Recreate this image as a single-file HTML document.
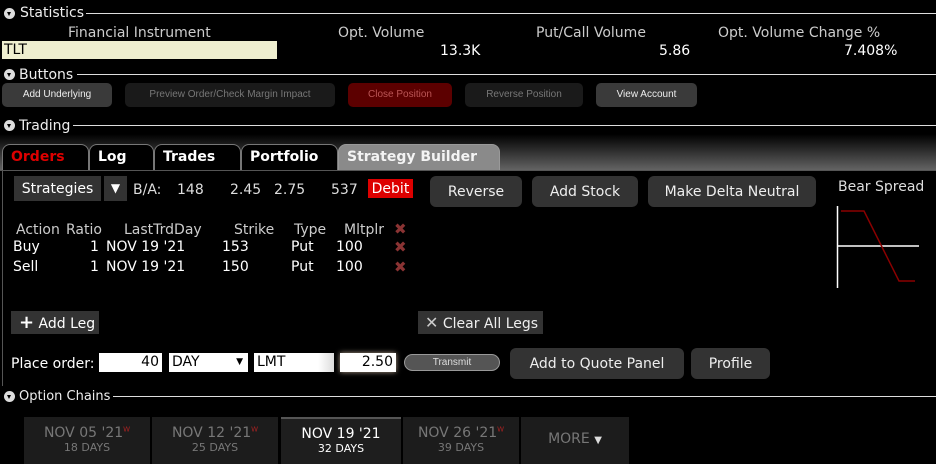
<!DOCTYPE html>
<html><head><style>
*{margin:0;padding:0;box-sizing:border-box}
body{width:936px;height:464px;background:#000;color:#fff;font-family:"DejaVu Sans","Liberation Sans",sans-serif;position:relative;overflow:hidden;font-size:14px}
.a{position:absolute;white-space:nowrap}
.sec{font-size:14px;color:#eee}
.tri{position:absolute;width:11px;height:11px;border-radius:50%;background:#ddd}
.tri:after{content:"";position:absolute;left:3px;top:4px;border-left:2.5px solid transparent;border-right:2.5px solid transparent;border-top:4px solid #000}
.hl{position:absolute;height:1px;background:#ddd;right:0}
.sb{position:absolute;height:24px;border-radius:5px;font-size:10px;text-align:center;line-height:24px;font-family:"Liberation Sans",sans-serif}
.btn{position:absolute;background:#333;border-radius:6px;font-size:14px;text-align:center;color:#eee}
.tab{position:absolute;top:144px;height:27px;border:1px solid #777;border-bottom:none;border-radius:8px 8px 0 0;background:#000;font-weight:bold;font-size:14px;padding-left:8px;line-height:24px}
.x{color:#8a3333;font-weight:bold;font-size:15px}
.inp{position:absolute;background:#fff;color:#000;height:19px;font-size:14px;line-height:19px;top:353px}
.oc{position:absolute;top:417px;height:47px;background:#1c1c1c;text-align:center;color:#777;font-size:14px;padding-top:8px}
.oc small{display:block;font-size:11px;margin-top:0}
.oc sup{color:#a22;font-size:7px}
</style></head><body>
<div class="tri" style="left:4px;top:8px"></div><div class="a sec" style="left:20px;top:5px">Statistics</div><div class="hl" style="left:86px;top:13px"></div>
<div class="a" style="left:68px;top:25px;color:#ccc">Financial Instrument</div>
<div class="a" style="left:338px;top:25px;color:#ccc">Opt. Volume</div>
<div class="a" style="left:536px;top:25px;color:#ccc">Put/Call Volume</div>
<div class="a" style="left:718px;top:25px;color:#ccc">Opt. Volume Change %</div>
<div class="a" style="left:2px;top:41px;width:275px;height:18px;background:#efefd0;color:#000;padding-left:2px;line-height:19px">TLT</div>
<div class="a" style="left:440px;top:43px">13.3K</div>
<div class="a" style="left:659px;top:43px">5.86</div>
<div class="a" style="left:844px;top:43px">7.408%</div>

<div class="tri" style="left:4px;top:69px"></div><div class="a sec" style="left:19px;top:67px">Buttons</div><div class="hl" style="left:77px;top:74px"></div>
<div class="sb" style="left:2px;top:83px;width:110px;background:#3a3a3a;color:#eee">Add Underlying</div>
<div class="sb" style="left:125px;top:83px;width:210px;background:#1a1a1a;color:#777">Preview Order/Check Margin Impact</div>
<div class="sb" style="left:348px;top:83px;width:104px;background:#5c0000;color:#b55">Close Position</div>
<div class="sb" style="left:465px;top:83px;width:118px;background:#1a1a1a;color:#777">Reverse Position</div>
<div class="sb" style="left:596px;top:83px;width:101px;background:#3a3a3a;color:#eee">View Account</div>

<div class="tri" style="left:4px;top:120px"></div><div class="a sec" style="left:19px;top:118px">Trading</div><div class="hl" style="left:73px;top:125px"></div>
<div class="a" style="left:0;top:134px;width:936px;height:37px;background:linear-gradient(#000,#666)"></div>
<div class="tab" style="left:2px;width:87px;color:#d00">Orders</div>
<div class="tab" style="left:89px;width:65px">Log</div>
<div class="tab" style="left:154px;width:87px">Trades</div>
<div class="tab" style="left:241px;width:97px">Portfolio</div>
<div class="tab" style="left:338px;width:162px;background:#8a8a8a;border-color:#999;color:#f4f4f4">Strategy Builder</div>
<div class="a" style="left:0;top:170px;width:936px;height:1px;background:#555"></div>
<div class="a" style="left:2px;top:171px;width:1px;height:215px;background:#555"></div>

<div class="a" style="left:14px;top:176px;width:87px;height:25px;background:#333;line-height:26px;text-align:center">Strategies</div>
<div class="a" style="left:104px;top:176px;width:23px;height:25px;background:#333;line-height:25px;text-align:center;font-size:12px">▼</div>
<div class="a" style="left:133px;top:182px;color:#ddd">B/A:</div>
<div class="a" style="left:177px;top:182px;color:#ddd">148</div>
<div class="a" style="left:230px;top:182px;color:#ddd">2.45</div>
<div class="a" style="left:274px;top:182px;color:#ddd">2.75</div>
<div class="a" style="left:331px;top:182px;color:#ddd">537</div>
<div class="a" style="left:368px;top:179px;width:45px;height:19px;background:#d00;line-height:20px;text-align:center">Debit</div>
<div class="btn" style="left:430px;top:176px;width:92px;height:31px;line-height:32px">Reverse</div>
<div class="btn" style="left:532px;top:176px;width:106px;height:31px;line-height:32px">Add Stock</div>
<div class="btn" style="left:648px;top:176px;width:168px;height:31px;line-height:32px">Make Delta Neutral</div>
<div class="a" style="left:838px;top:179px;color:#ddd">Bear Spread</div>
<svg class="a" style="left:836px;top:204px" width="84" height="84"><line x1="1.5" y1="2" x2="1.5" y2="84" stroke="#fff" stroke-width="1.5"/><line x1="1" y1="42" x2="83" y2="42" stroke="#fff" stroke-width="1.5"/><polyline points="5,7 28,7 63,77 79,77" fill="none" stroke="#8a0000" stroke-width="1.5"/></svg>

<div class="a" style="left:16px;top:222px;color:#ccc">Action</div>
<div class="a" style="left:66px;top:222px;color:#ccc">Ratio</div>
<div class="a" style="left:124px;top:222px;color:#ccc">LastTrdDay</div>
<div class="a" style="left:234px;top:222px;color:#ccc">Strike</div>
<div class="a" style="left:294px;top:222px;color:#ccc">Type</div>
<div class="a" style="left:344px;top:222px;color:#ccc">Mltplr</div>
<div class="a x" style="left:394px;top:220px">✖</div>
<div class="a" style="left:13px;top:239px">Buy</div><div class="a" style="left:90px;top:239px">1</div><div class="a" style="left:106px;top:239px">NOV 19 '21</div><div class="a" style="left:222px;top:239px">153</div><div class="a" style="left:291px;top:239px">Put</div><div class="a" style="left:336px;top:239px">100</div><div class="a x" style="left:394px;top:238px">✖</div>
<div class="a" style="left:13px;top:259px">Sell</div><div class="a" style="left:90px;top:259px">1</div><div class="a" style="left:106px;top:259px">NOV 19 '21</div><div class="a" style="left:222px;top:259px">150</div><div class="a" style="left:291px;top:259px">Put</div><div class="a" style="left:336px;top:259px">100</div><div class="a x" style="left:394px;top:258px">✖</div>

<div class="a" style="left:11px;top:311px;width:88px;height:23px;background:#333;line-height:24px;padding-left:8px"><span style="font-size:18px;font-weight:bold">+</span> Add Leg</div>
<div class="a" style="left:418px;top:311px;width:125px;height:23px;background:#333;line-height:24px;padding-left:7px;color:#eee"><span style="color:#ccc;font-size:16px">✕</span> Clear All Legs</div>

<div class="a" style="left:11px;top:356px">Place order:</div>
<div class="inp" style="left:99px;width:63px;text-align:right;padding-right:3px">40</div>
<div class="inp" style="left:169px;width:79px;padding-left:3px">DAY<span style="position:absolute;right:5px;font-size:9px">▼</span></div>
<div class="inp" style="left:254px;width:80px;padding-left:3px;background:linear-gradient(90deg,#fff 80%,#ddd)">LMT</div>
<div class="inp" style="left:340px;width:56px;text-align:right;padding-right:3px;box-shadow:0 0 5px #a98">2.50</div>
<div class="a" style="left:404px;top:354px;width:96px;height:17px;border-radius:9px;background:#555;border:1px solid #999;font-size:10px;text-align:center;line-height:15px;font-family:'Liberation Sans',sans-serif;color:#ddd">Transmit</div>
<div class="btn" style="left:510px;top:348px;width:174px;height:31px;line-height:32px">Add to Quote Panel</div>
<div class="btn" style="left:691px;top:348px;width:79px;height:31px;line-height:32px">Profile</div>

<div class="tri" style="left:4px;top:391px"></div><div class="a sec" style="left:19px;top:389px;font-size:13px">Option Chains</div><div class="hl" style="left:113px;top:396px"></div>
<div class="oc" style="left:24px;width:126px">NOV 05 '21<sup>W</sup><small>18 DAYS</small></div>
<div class="oc" style="left:152px;width:126px">NOV 12 '21<sup>W</sup><small>25 DAYS</small></div>
<div class="oc" style="left:281px;width:120px;background:#1e1e1e;border-top:2px solid #555;color:#fff;padding-top:7px">NOV 19 '21<small>32 DAYS</small></div>
<div class="oc" style="left:403px;width:116px">NOV 26 '21<sup>W</sup><small>39 DAYS</small></div>
<div class="oc" style="left:521px;width:108px;padding-top:14px">MORE <span style="color:#ddd;font-size:10px">▼</span></div>
</body></html>
